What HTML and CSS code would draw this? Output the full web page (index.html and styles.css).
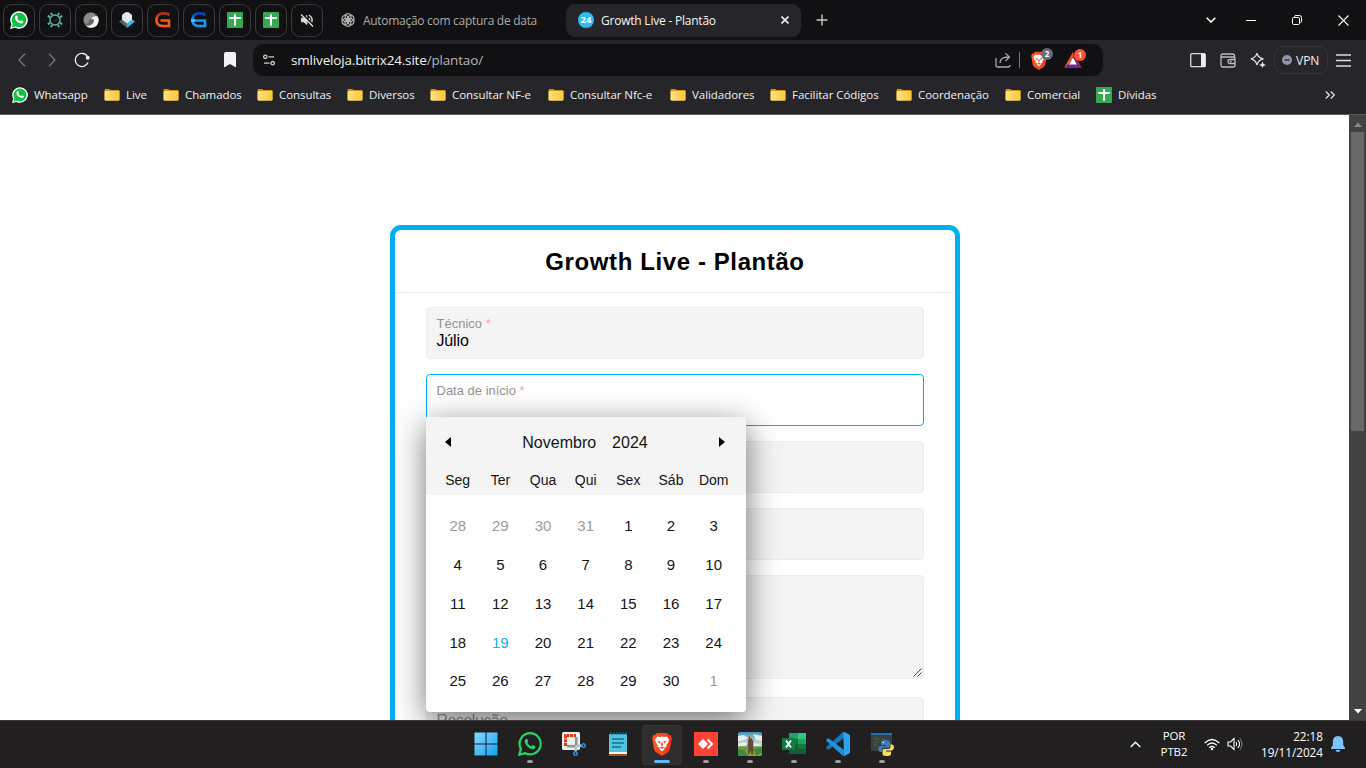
FILE: index.html
```html
<!DOCTYPE html>
<html lang="pt-BR">
<head>
<meta charset="utf-8">
<title>Growth Live - Plantão</title>
<link rel="stylesheet" href="styles.css">
</head>
<body>
<svg class="defs" width="0" height="0">
  <symbol id="whats" viewBox="0 0 16 16"><path d="M8 .2a7.8 7.8 0 0 0-6.8 11.6L.1 16l4.3-1.1A7.8 7.8 0 1 0 8 .2z" fill="#fff"/><circle cx="8" cy="8" r="6.5" fill="#12c143"/><path d="M1.5 14.6l.9-3.6 2.6 2.700z" fill="#12c143"/><path d="M5.300 4.200c.5-.5 1-.3 1.200.2l.5 1.200c.1.300-.5.900-.6 1.100.6 1.200 1.500 2 2.700 2.500.4-.200.7-.9 1-.9l1.500.7c.6.300 0 1.500-.5 1.800-1 .6-2.300.2-3.600-.5-1.500-.9-2.600-2.300-3-3.500-.300-1.100.1-2 .8-2.600z" fill="#fff"/></symbol>
  <symbol id="folder" viewBox="0 0 16 14"><path d="M.5 2.200Q.5 1 1.600 1h3.600q.6 0 .9.500l.4.500H14.500q1 0 1 1v9H.5z" fill="#cf951d"/><path d="M1.200 3h14.300v8.500q0 1.200-1.200 1.200H2q-1.400 0-1.400-1.200V4z" fill="url(#fg)"/></symbol>
  <symbol id="sheet" viewBox="0 0 16 16"><rect width="16" height="16" rx="1" fill="#34a853"/><path d="M7 2.200h2V5h4.800v2H9v6.800H7V7H2.200V5H7z" fill="#fff"/></symbol>
  <symbol id="brave" viewBox="0 0 20 24"><path d="M5 1h10l2 2 2 .5 1 3.500-.7 1.500L18 17q-.5 2-2.500 3.500L10 24l-5.500-3.500Q2.500 19 2 17L.7 8.500 0 7l1-3.500L3 3z" fill="url(#bg)"/><path d="M5.300 4.500l2.200.5L10 4.500l2.500.5 2.200-.5L17 7.600l-.8 2.900-2 2.800.3 1.400-2.500 1 .6 1.300L10 19.500 7.400 17l.6-1.300-2.500-1 .3-1.400-2-2.800L3 7.600z" fill="#fff"/><path d="M5 8.500l3.700 1.300-.9 1.900zM15 8.500l-3.700 1.300.9 1.900zM9.300 10.500h1.400l.3 2.800-1 .7-1-.7zM8 15.700l2-1.100 2 1.100-2 1.400z" fill="#f5441d"/></symbol>
  <defs>
    <linearGradient id="fg"><stop stop-color="#ffe27d"/><stop offset="1" stop-color="#fbc83c"/></linearGradient>
    <linearGradient id="bg"><stop stop-color="#ff5a17"/><stop offset="1" stop-color="#f33422"/></linearGradient>
    <linearGradient id="wg" x2="1" y2="1"><stop stop-color="#87dcff"/><stop offset="1" stop-color="#139ff2"/></linearGradient>
    <linearGradient id="red" gradientUnits="userSpaceOnUse" x1="0" y1="0" x2="0" y2="16"><stop stop-color="#a32a10"/><stop offset=".5" stop-color="#ff5a0a"/></linearGradient>
    <linearGradient id="blue" gradientUnits="userSpaceOnUse" x1="0" y1="0" x2="0" y2="16"><stop stop-color="#0637b0"/><stop offset=".55" stop-color="#0f9bff"/></linearGradient>
    <linearGradient id="sky" x2="0" y2="1"><stop stop-color="#4c91bd"/><stop offset=".5" stop-color="#c7dfd7"/><stop offset=".65" stop-color="#6f963c"/><stop offset="1" stop-color="#92ac2d"/></linearGradient>
  </defs>
</svg>

<header class="tabs">
  <div class="pinned"><svg width="18" height="18"><use href="#whats"/></svg></div>
  <div class="pinned"><svg width="16" height="16" viewBox="0 0 16 16" fill="none" stroke="#58b5a3"><circle cx="8" cy="8" r="5" stroke-width="1.500"/><path d="M5 3L4 .8M11 3l1-2.200M5 13l-1 2.200M11 13l1 2.200M3 5L.8 4M3 11l-2.200 1M13 5l2.200-1M13 11l2.200 1" stroke-width="2"/><path d="M6 8l1.500 1.500L10 7" stroke="#244b45"/></svg></div>
  <div class="pinned"><svg width="16" height="16" viewBox="0 0 16 16"><circle cx="8" cy="8" r="7.800" fill="#666"/><path d="M2 4Q5 .2 9 1q3 .7 3 3L8.500 6.500Q5 8 5.500 11L3 12Q-.5 9 2 4z" fill="#8e8e8e"/><path d="M11 4.500Q13.500 3.500 15 5q1.600 4-.6 7.500Q11 17 5 15.200q-1.500-.8-2-2 3 1.300 5.500-.7Q11 11 11 8q-1-1.500-3-.5Q8.500 5 11 4.500z" fill="#f2f2f2"/></svg></div>
  <div class="pinned"><svg width="16" height="16" viewBox="0 0 16 16"><path d="M3 3l3-2.500q2-1 4 0L13 3v6.500L8 12.500 3 9.500z" fill="#e4e6e8"/><path d="M0 9.500L2.800 7.500 8 11.500V16z" fill="#4f626e"/><path d="M16 9.500l-2.800-2L8 11.500V16z" fill="#36b5f4"/></svg></div>
  <div class="pinned"><svg width="16" height="16" viewBox="0 0 16 16"><path d="M14.500 2.800Q11 .8 7 1.300 1.500 2.500 1.500 8q0 6 6 6H14V8.500H5.500" fill="none" stroke="url(#red)" stroke-width="2.600"/></svg></div>
  <div class="pinned"><svg width="16" height="16" viewBox="0 0 16 16"><path d="M14.500 2.800Q11 .8 7 1.300 1.500 2.500 1.500 8q0 6 6 6H14V8.500H4" fill="none" stroke="url(#blue)" stroke-width="2.600"/><path d="M0 8.500h4" stroke="#3fd0ff" stroke-width="2.600"/></svg></div>
  <div class="pinned"><svg width="16" height="16"><use href="#sheet"/></svg></div>
  <div class="pinned"><svg width="16" height="16"><use href="#sheet"/></svg></div>
  <div class="pinned"><svg width="14" height="14" viewBox="0 0 14 14" fill="#ddd" stroke="#ddd" stroke-width="1.400"><path d="M1.500 5.200h2.300L6.800 2.500v9L3.800 8.800H1.500z" stroke-width="1"/><path d="M9 5q1.500 2 0 4M9 2q5.500 4 1.500 9" fill="none"/><path d="M1.500.5l12 12" stroke="#111113" stroke-width="2"/><path d="M1 1.500l12 12"/></svg></div>
  <div class="tab"><svg width="14" height="14" viewBox="-7 -7 14 14" fill="none" stroke="#b4b4b4" stroke-width="1.100"><g id="petal"><path d="M-3.200-4.900Q0-7.800 3-4.800V-1.200L0 .8M-2.800-4.700V-1L0 .8"/></g><use href="#petal" transform="rotate(60)"/><use href="#petal" transform="rotate(120)"/><use href="#petal" transform="rotate(180)"/><use href="#petal" transform="rotate(240)"/><use href="#petal" transform="rotate(300)"/></svg><span class="tab-title">Automação com captura de data</span></div>
  <div class="tab active"><span class="fav">24</span><span class="tab-title">Growth Live - Plantão</span><svg class="tab-close" width="8" height="8" viewBox="0 0 8 8"><path d="M.5.5l7 7m0-7l-7 7" stroke="#eee" stroke-width="1.600"/></svg></div>
  <svg class="plus" width="12" height="12" viewBox="0 0 12 12"><path d="M6 .5v11M.5 6h11" stroke="#c8c8c8" stroke-width="1.400"/></svg>
  <div class="win">
    <span class="win-btn drop"><svg width="10" height="6" viewBox="0 0 10 6"><path d="M.7.7L5 5 9.300.7" fill="none" stroke="#fff" stroke-width="1.600"/></svg></span>
    <span class="win-btn"><svg width="10" height="10"><path d="M0 5.500h10" stroke="#fff"/></svg></span>
    <span class="win-btn"><svg width="10" height="10" viewBox="0 0 10 10" fill="none" stroke="#fff"><rect x=".5" y="2.500" width="7" height="7" rx="1.200"/><path d="M2.500 1.800Q2.500.5 4 .5h3.500Q9.500.5 9.500 2.500V6q0 1.500-1.300 1.500"/></svg></span>
    <span class="win-btn"><svg width="11" height="11"><path d="M.5.5l10 10m0-10l-10 10" stroke="#fff" stroke-width="1.100"/></svg></span>
  </div>
</header>

<nav class="toolbar">
  <span class="nav-btn"><svg width="8" height="14" viewBox="0 0 8 14"><path d="M7 .7L1 7l6 6.300" fill="none" stroke="#77777c" stroke-width="1.300"/></svg></span>
  <span class="nav-btn"><svg width="8" height="14" viewBox="0 0 8 14"><path d="M1 .7L7 7l-6 6.300" fill="none" stroke="#77777c" stroke-width="1.300"/></svg></span>
  <span class="nav-btn"><svg width="16" height="16" viewBox="0 0 16 16"><path d="M13.800 5A6.600 6.600 0 1 0 14 10.500" fill="none" stroke="#eee" stroke-width="1.400"/><circle cx="13.700" cy="5.700" r="2" fill="#eee"/></svg></span>
  <svg class="mark" width="12" height="16" viewBox="0 0 12 16"><path d="M0 2Q0 0 2 0h8q2 0 2 2v13.500L6 12 0 15.500z" fill="#f3f3f5"/></svg>
  <div class="url">
    <svg width="12" height="12" viewBox="0 0 12 12" fill="none" stroke="#ccc" stroke-width="1.300"><circle cx="2.300" cy="2.800" r="1.700"/><path d="M5.500 2.800H11M1 9.200h5.500"/><circle cx="9.700" cy="9.200" r="1.700"/></svg>
    <span class="address">smliveloja.bitrix24.site<span class="path">/plantao/</span></span>
    <svg width="16" height="16" viewBox="0 0 16 16" fill="none" stroke="#a9a9ad" stroke-width="1.300"><path d="M1 6v7q0 2 2 2h10q2 0 2-2M5 11Q5 5 13.500 5M10.500 1.500L14.500 5l-4 4"/></svg>
    <i class="divider"></i>
    <span class="ext"><svg width="16" height="19"><use href="#brave"/></svg><b class="badge gray">2</b></span>
    <span class="ext"><svg width="18" height="16" viewBox="0 0 18 16"><path d="M9 0v5L5 12l-5 4z" fill="#ff5030"/><path d="M9 0l9 16-5-4-4-7z" fill="#9f1f63"/><path d="M0 16l5-4h8l5 4z" fill="#662d91"/><path d="M9 5.500l4 7H5z" fill="#fff"/></svg><b class="badge">1</b></span>
  </div>
  <div class="tools">
    <span class="tool"><svg width="16" height="15"><rect x=".7" y=".7" width="14.600" height="13" rx="1" fill="none" stroke="#ddd" stroke-width="1.300"/><path d="M11 1h4v12.500h-4z" fill="#eee"/></svg></span>
    <span class="tool"><svg width="16" height="15" fill="none" stroke="#bdbdc1" stroke-width="1.300"><path d="M14.500 4V3q0-2-2-2h-10Q1 1 1 2.500T2.500 4h11q1.500 0 1.500 1.500V12q0 2-2 2H3q-2 0-2-2V2.500M15 6.500h-5q-2 0-2 1.500v1q0 1.500 2 1.500h5M10 8.500h1.500"/></svg></span>
    <span class="tool"><svg width="16" height="16" viewBox="0 0 16 16"><path d="M7 1.200q1 4.800 6.500 5.600Q8 7.800 7 13 5.800 7.800.8 6.800 5.800 5.800 7 1.200z" fill="none" stroke="#ddd" stroke-width="1.300"/><path d="M12.500 9.500l1 2.500 2.500 1-2.500 1-1 2-1-2-2.500-1 2.500-1z" fill="#eee"/></svg></span>
    <span class="vpn"><svg width="10" height="10"><circle cx="5" cy="5" r="5" fill="#9197a8"/><path d="M2.500 5h5" stroke="#25252a" stroke-width="1.300"/></svg><span>VPN</span></span>
    <svg class="menu" width="15" height="13"><path d="M0 1h15M0 6.500h15M0 12h15" stroke="#ddd" stroke-width="1.300"/></svg>
  </div>
</nav>

<div class="bookmarks">
  <span class="bm" style="width:76px"><svg width="16" height="16"><use href="#whats"/></svg><span>Whatsapp</span></span>
  <span class="bm" style="width:43px"><svg width="16" height="14"><use href="#folder"/></svg><span>Live</span></span>
  <span class="bm" style="width:78px"><svg width="16" height="14"><use href="#folder"/></svg><span>Chamados</span></span>
  <span class="bm" style="width:74px"><svg width="16" height="14"><use href="#folder"/></svg><span>Consultas</span></span>
  <span class="bm" style="width:67px"><svg width="16" height="14"><use href="#folder"/></svg><span>Diversos</span></span>
  <span class="bm" style="width:102px"><svg width="16" height="14"><use href="#folder"/></svg><span>Consultar NF-e</span></span>
  <span class="bm" style="width:106px"><svg width="16" height="14"><use href="#folder"/></svg><span>Consultar Nfc-e</span></span>
  <span class="bm" style="width:84px"><svg width="16" height="14"><use href="#folder"/></svg><span>Validadores</span></span>
  <span class="bm" style="width:110px"><svg width="16" height="14"><use href="#folder"/></svg><span>Facilitar Códigos</span></span>
  <span class="bm" style="width:93px"><svg width="16" height="14"><use href="#folder"/></svg><span>Coordenação</span></span>
  <span class="bm" style="width:75px"><svg width="16" height="14"><use href="#folder"/></svg><span>Comercial</span></span>
  <span class="bm" style="width:61px"><svg width="16" height="16"><use href="#sheet"/></svg><span>Dívidas</span></span>
  <svg class="more" width="10" height="8" viewBox="0 0 10 8"><path d="M.8.5L4.300 4 .8 7.500M5.800.5L9.300 4 5.800 7.500" fill="none" stroke="#ddd" stroke-width="1.400"/></svg>
</div>

<div class="view">
  <main class="page">
    <section class="card">
      <h1 class="title">Growth Live - Plantão</h1>
      <div class="form">
        <div class="field"><label class="label">Técnico <i>*</i></label><span class="value">Júlio</span></div>
        <div class="field focus"><label class="label">Data de início <i>*</i></label>
          <div class="picker">
            <div class="picker-head">
              <div class="month-row"><svg width="6" height="10"><path d="M6 0v10L0 5z"/></svg><span class="month"><span>Novembro</span><span>2024</span></span><svg width="6" height="10"><path d="M0 0v10l6-5z"/></svg></div>
              <div class="week names"><span>Seg</span><span>Ter</span><span>Qua</span><span>Qui</span><span>Sex</span><span>Sáb</span><span>Dom</span></div>
            </div>
            <div class="week days">
              <span class="off">28</span><span class="off">29</span><span class="off">30</span><span class="off">31</span><span>1</span><span>2</span><span>3</span>
              <span>4</span><span>5</span><span>6</span><span>7</span><span>8</span><span>9</span><span>10</span>
              <span>11</span><span>12</span><span>13</span><span>14</span><span>15</span><span>16</span><span>17</span>
              <span>18</span><span class="today">19</span><span>20</span><span>21</span><span>22</span><span>23</span><span>24</span>
              <span>25</span><span>26</span><span>27</span><span>28</span><span>29</span><span>30</span><span class="off">1</span>
            </div>
          </div>
        </div>
        <div class="field"></div>
        <div class="field"></div>
        <div class="field area"><svg width="9" height="9"><path d="M.5 8.500l8-8M4.500 8.500l4-4" stroke="#444" stroke-width="1"/></svg></div>
        <div class="field last"><span class="big-label">Resolução</span></div>
      </div>
    </section>
  </main>
  <div class="scroll">
    <svg width="8" height="5"><path d="M0 5l4-4.500L8 5z" fill="#878787"/></svg>
    <div class="thumb"></div>
    <svg class="down" width="8" height="5"><path d="M0 0h8L4 4.500z" fill="#fff"/></svg>
  </div>
</div>

<footer class="taskbar">
  <div class="apps">
    <span class="app idle"><svg width="24" height="24" viewBox="0 0 24 24"><path d="M.5.5h11v11H.5zM12.500.5h11v11h-11zM.5 12.500h11v11H.5zM12.500 12.500h11v11h-11z" fill="url(#wg)"/></svg></span>
    <span class="app"><svg width="24" height="24" viewBox="0 0 24 24"><path d="M12.200 1.200a10.600 10.600 0 0 0-9.300 15.700L1.300 22.700l5.900-1.500a10.600 10.600 0 1 0 5-20z" fill="none" stroke="#29d366" stroke-width="2.200"/><path d="M7.600 7.200c.6-.7 1.500-.8 1.900.2l.8 1.900c.2.500-.5 1.200-.8 1.600 1 1.700 2.100 2.700 3.900 3.500.5-.5 1-1.500 1.600-1.300l2.200 1.100c.8.400-.2 2.300-1 2.700-1.700.8-4-.2-5.700-1.500-1.700-1.300-3.200-3.200-3.700-4.900-.3-1.400 0-2.500.8-3.300z" fill="#29d366"/></svg></span>
    <span class="app idle"><svg width="24" height="24" viewBox="0 0 24 24"><rect width="18" height="18" rx="1.500" fill="#efefef"/><path d="M3.500 14V3.500H14" fill="none" stroke="#dc3b10" stroke-width="3" stroke-dasharray="3 .8"/><path d="M14.300 5v9M5 14.300h9" stroke="#87949e" stroke-width="2.600"/><path d="M13.500 14.500l6-1M14 14l-.5 5.500" stroke="#b6c2ca" stroke-width="2.400"/><circle cx="21.500" cy="13.500" r="1.700" fill="none" stroke="#258fe0" stroke-width="1.600"/><circle cx="13.500" cy="21.500" r="1.700" fill="none" stroke="#258fe0" stroke-width="1.600"/></svg></span>
    <span class="app idle"><svg width="18" height="24" viewBox="0 0 18 24"><path d="M0 2h18v19H0z" fill="#52c5dc"/><path d="M0 20h18v2H0z" fill="#f5f5f5"/><path d="M0 22h18v2H0z" fill="#a64d16"/><path d="M2 0v3M5 0v3M8 0v3M11 0v3M14 0v3M17 0v3" stroke="#137591" stroke-width="1.200"/><path d="M3 7h12M3 11h12M3 15h9" stroke="#11738f" stroke-width="1.500"/></svg></span>
    <span class="app current"><svg width="20" height="24"><use href="#brave"/></svg></span>
    <span class="app"><svg width="24" height="24" viewBox="0 0 24 24"><rect width="24" height="24" fill="#fb4337"/><path d="M9 7l5 5-5 5-5-5z" fill="#fff"/><path d="M13.500 7.500L18 12l-4.500 4.500" fill="none" stroke="#fff" stroke-width="2"/></svg></span>
    <span class="app"><svg width="24" height="24" viewBox="0 0 24 24"><rect width="24" height="24" rx="2" fill="url(#sky)"/><path d="M0 4l6-1 4 3-3 2-7 1zM15 2l9 2v5l-6-1zM0 12l6-2 4 2-3 2H0zM15 11l6 1 3 2h-8z" fill="#e6f0e6"/><path d="M0 17l7 1 3 6H0zM16 17l8-2v6l-6 3z" fill="#3e8c42"/><path d="M11.500 4h2.500v3l1.500 2.500-.5 5 .5 3-.7 5h-1.500l-.8-5-1 5H10l.3-7-.8-2 .5-5z" fill="#664a38"/><path d="M12 4h2v2.500h-2z" fill="#ce9b73"/></svg></span>
    <span class="app"><svg width="24" height="24" viewBox="0 0 24 24"><path d="M7 1h17v21H7z" fill="#185c37"/><path d="M7 1h9v6H7z" fill="#21a366"/><path d="M16 1h8v6h-8z" fill="#33c481"/><path d="M16 7h8v5h-8z" fill="#21a366"/><path d="M7 7h9v5H7z" fill="#107c41"/><path d="M16 12h8v5h-8z" fill="#107c41"/><rect y="6" width="13" height="12" rx="1" fill="#107c41"/><path d="M4 8.500l5 7m0-7l-5 7" stroke="#fff" stroke-width="1.900"/></svg></span>
    <span class="app"><svg width="24" height="24" viewBox="0 0 24 24"><path d="M17.500 0L18 6 3 17.500q-.6.4-1.200 0L.4 16.200q-.6-.6 0-1.200L16.500.5z" fill="#1577bd"/><path d="M17.500 24L18 18 3 6.500q-.6-.4-1.200 0L.4 7.800q-.6.600 0 1.200L16.500 23.500z" fill="#2093dc"/><path d="M17.200.200Q17.800-.1 18.300.1L23.300 2.500q.7.400.7 1.200v16.600q0 .8-.7 1.200l-5 2.400q-.6.200-1.100-.1l.8-1z" fill="#2ea3ec"/></svg></span>
    <span class="app"><svg width="24" height="24" viewBox="0 0 24 24"><rect x="1" y="1" width="21" height="18" fill="#3b4043"/><path d="M1 1h21v2H1z" fill="#1674bc"/><path d="M4 7h6M4 10h5M4 13h4M11 7h4" stroke="#356f42" stroke-width="1.200"/><path d="M15 8q-4 0-4 2.500V13h5v1h-5.500q-2 0-2 3t2 3H12v-2.500q0-2 2-2h4q2 0 2-2v-3Q20 8 15 8z" fill="#3d7db5"/><path d="M17 24q4 0 4-2V19.500h-5v-1h6q2-.5 2-3.500 0-2.500-2-2.500H20.500v2.500q0 2-2 2h-4q-2 0-2 2v3Q12.500 24 17 24z" fill="#ffda58"/><circle cx="13.300" cy="10.500" r=".8" fill="#fff"/><circle cx="18.500" cy="21.800" r=".8" fill="#fff"/></svg></span>
  </div>
  <div class="tray">
    <svg class="up" width="11" height="7"><path d="M.7 6L5.500 1.200 10.300 6" fill="none" stroke="#fff" stroke-width="1.400"/></svg>
    <div class="lang"><span>POR</span><span>PTB2</span></div>
    <svg class="wifi" width="16" height="13" viewBox="0 0 16 13" fill="none" stroke="#fff" stroke-width="1.200"><path d="M.7 5Q8-2 15.300 5M3 7.400q5-4.800 10 0M5.200 9.800q2.800-2.600 5.600 0"/><circle cx="8" cy="11" r="1.200" fill="#fff" stroke="none"/></svg>
    <svg class="sound" width="16" height="14" viewBox="0 0 16 14" fill="none" stroke="#fff" stroke-width="1.100"><path d="M1 5h2.500L7 1.500v11L3.500 9H1zM9 5q1.300 2 0 4M11 3q3 4 0 8"/><path d="M13 1.500q4 5.500 0 11" stroke="#777"/></svg>
    <div class="clock"><span>22:18</span><span>19/11/2024</span></div>
    <svg class="bell" width="14" height="16" viewBox="0 0 14 16"><path d="M7 0Q1.800 0 1.800 6v3L0 12v1h14v-1l-1.800-3V6Q12.200 0 7 0z" fill="#7cc5fb"/><path d="M4.500 14h5q-.5 2-2.500 2t-2.500-2z" fill="#7cc5fb"/></svg>
  </div>
</footer>
</body>
</html>
```
FILE: styles.css
```css
* { box-sizing: border-box; }
body { margin: 0; width: 1366px; height: 768px; overflow: hidden; display: flex; flex-direction: column; background: #111113; font-family: "Open Sans", "Noto Sans", sans-serif; font-size: 11.5px; color: #f0f0f0; }
svg { display: block; flex: none; }
span { white-space: nowrap; }
.defs { position: absolute; }

.tabs { height: 40px; flex: none; display: flex; align-items: center; background: #111113; padding-left: 3px; }
.pinned { width: 32px; height: 33px; margin-right: 4px; flex: none; border: 1px solid #3a3a3d; border-radius: 9px; display: flex; align-items: center; justify-content: center; }
.tab { display: flex; align-items: center; width: 239px; flex: none; padding-left: 14px; height: 33px; color: #a9a9ac; }
.tab-title { margin-left: 8px; font-size: 12px; letter-spacing: -.29px; }
.tab.active { width: 235px; padding: 0 12px; background: #25252a; border-radius: 9px; color: #f5f5f5; }
.tab.active .tab-title { margin-left: 7px; letter-spacing: -.22px; }
.fav { width: 16px; height: 16px; border-radius: 8px; background: #2bbdf0; font-size: 9.500px; line-height: 16px; text-align: center; font-weight: 700; color: #fff; }
.tab-close { margin-left: auto; }
.plus { margin-left: 15px; }
.win { margin-left: auto; display: flex; }
.win-btn { width: 46px; height: 40px; display: flex; align-items: center; justify-content: center; }
.win-btn.drop { width: 34px; }

.toolbar { height: 40px; flex: none; display: flex; align-items: center; background: #25252a; padding-left: 7px; }
.nav-btn { width: 30px; display: flex; justify-content: center; flex: none; }
.mark { margin-left: 127px; }
.url { width: 850px; height: 32px; margin-left: 17px; flex: none; border-radius: 10px; background: #111113; display: flex; align-items: center; padding: 0 20px 0 10px; }
.address { margin-left: 16px; margin-right: auto; font-size: 13.500px; letter-spacing: -.17px; }
.path { color: #b5b5b8; }
.divider { width: 1px; height: 16px; background: #77777b; margin: 0 11px 0 8px; }
.ext { position: relative; margin-right: 17px; }
.ext + .ext { margin-right: 1px; }
.badge { position: absolute; left: 10px; top: -3px; width: 12px; height: 12px; border-radius: 6px; background: #ff5331; color: #fff; font-size: 8px; line-height: 12px; text-align: center; }
.badge.gray { background: #666c7b; }
.tools { margin-left: auto; display: flex; align-items: center; }
.tool { width: 30px; display: flex; justify-content: center; }
.vpn { width: 54px; height: 28px; border: 1px solid #34343a; border-radius: 9px; display: flex; align-items: center; gap: 4px; padding-left: 7px; font-size: 12px; margin-left: 1px; }
.menu { margin: 0 15px 0 8px; }

.bookmarks { height: 35px; flex: none; display: flex; align-items: center; gap: 16px; background: #25252a; border-bottom: 1px solid #5b5a5f; padding: 0 31px 5px 12px; }
.bm { display: flex; align-items: center; gap: 6px; flex: none; letter-spacing: -.05px; }
.more { margin-left: auto; }

.view { flex: 1; display: flex; min-height: 0; background: #fff; }
.page { flex: 1; overflow: hidden; padding-top: 110px; font-family: "Liberation Sans", Arial, sans-serif; }
.card { width: 570px; height: 600px; margin: 0 0 0 390px; border: 5px solid #00afef; border-radius: 11px; }
.title { margin: 0; height: 63px; border-bottom: 1px solid #ececec; text-align: center; font-size: 24px; line-height: 63px; letter-spacing: .600px; color: #000; }
.form { padding: 14px 31px; display: flex; flex-direction: column; gap: 15px; }
.field { height: 52px; flex: none; border: 1px solid #ececec; border-radius: 4px; background: #f4f4f4; padding: 8px 9.500px; position: relative; display: flex; flex-direction: column; }
.field.focus { background: #fff; border-color: #00afef; z-index: 1; }
.field.area { height: 104px; align-items: flex-end; justify-content: flex-end; padding: 1px; }
.field.last { margin-top: 3px; padding-top: 14px; }
.label { font-size: 13px; line-height: 16px; color: #939393; }
.label i { color: #f7a1a1; font-style: normal; }
.value { font-size: 16px; line-height: 18px; color: #000; letter-spacing: -.15px; }
.big-label { font-size: 16px; line-height: 18px; color: #939393; letter-spacing: -.5px; }

.picker { position: absolute; left: -1px; top: 42px; width: 320px; height: 295px; background: #fff; border-radius: 0 0 4px 4px; box-shadow: 0 8px 32px rgba(0,0,0,.55); color: #141414; }
.picker-head { background: #f4f4f4; height: 78px; padding-top: 10px; }
.month-row { height: 30px; display: flex; align-items: center; justify-content: space-between; padding: 0 21px 0 19px; }
.month { display: flex; gap: 16px; font-size: 16px; padding-top: 1px; }
.week { display: grid; grid-template-columns: repeat(7, 42.660px); padding-left: 10.400px; text-align: center; }
.names { font-size: 14px; line-height: 46px; }
.days { padding-top: 12px; font-size: 15px; line-height: 38.850px; }
.off { color: #9b9b9b; }
.today { color: #13b1f0; }

.scroll { width: 17px; background: #424242; display: flex; flex-direction: column; align-items: center; padding: 7px 0 6px; }
.thumb { width: 13px; height: 299px; margin-top: 5px; background: #686868; }
.down { margin-top: auto; }

.taskbar { height: 48px; flex: none; display: flex; align-items: center; background: #211f20; border-top: 1px solid #3b393a; padding-left: 466px; }
.apps { display: flex; gap: 4px; }
.app { width: 40px; height: 40px; border-radius: 4px; display: flex; flex-direction: column; align-items: center; justify-content: flex-end; }
.app::after { content: ""; width: 6px; height: 3px; border-radius: 2px; background: #9a9a9a; margin: 4px 0 2px; }
.app.idle::after { background: transparent; }
.app.current { background: #2f2d2e; box-shadow: inset 0 0 0 1px #353334; }
.app.current::after { width: 16px; background: #60b5f5; }
.tray { margin-left: auto; display: flex; align-items: center; padding: 0 21px 1px 0; line-height: 16px; color: #fff; }
.lang { width: 30px; margin-left: 18px; display: flex; flex-direction: column; align-items: center; font-size: 11.500px; letter-spacing: -.1px; }
.wifi { margin-left: 15px; }
.sound { margin-left: 7px; }
.clock { width: 63px; margin-left: 17px; display: flex; flex-direction: column; align-items: flex-end; font-size: 11.700px; }
.bell { margin-left: 8px; }
```
